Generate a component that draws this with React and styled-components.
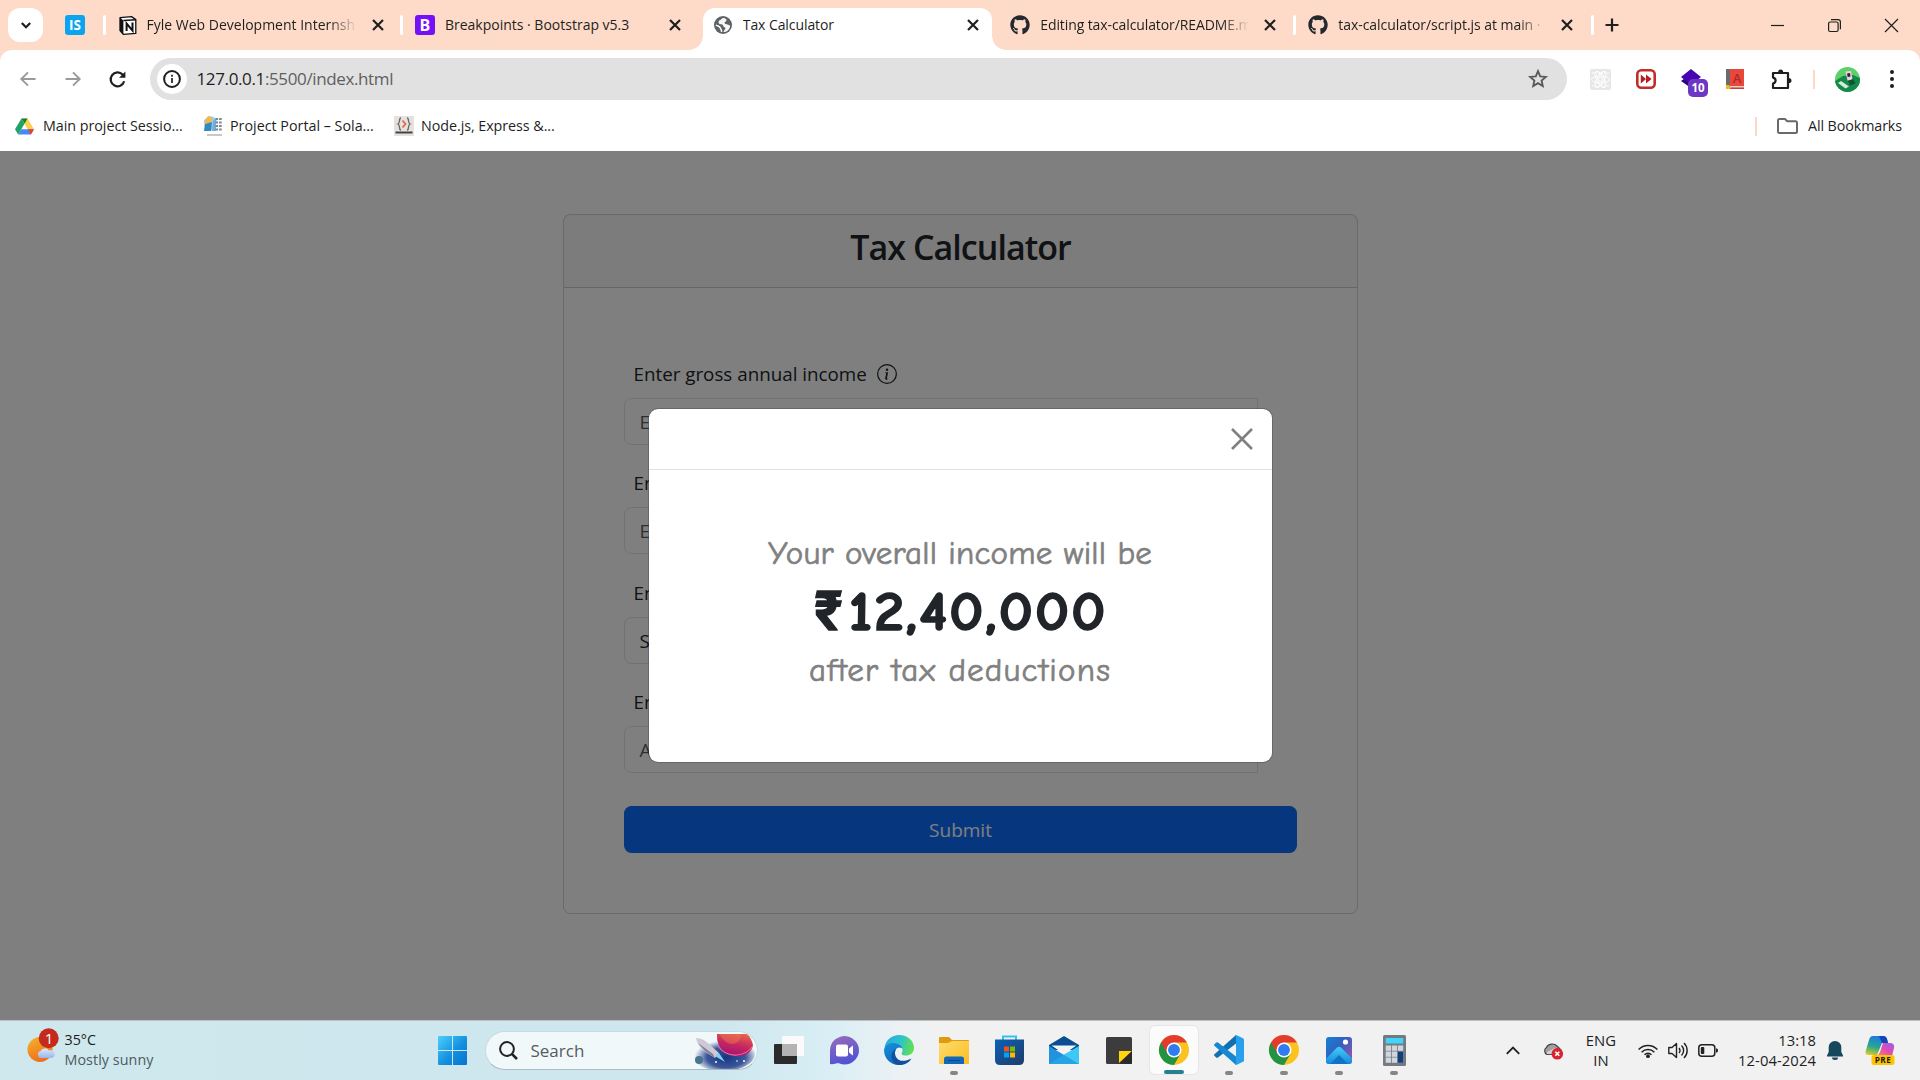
import React from "react";
import styled, { createGlobalStyle, css } from "styled-components";
import { FaGithub } from "react-icons/fa";

const GlobalStyle = createGlobalStyle`
  *, *::before, *::after { box-sizing: border-box; }
  body { margin: 0; overflow: hidden; font-family: "Open Sans", "Noto Sans", sans-serif; }
  svg { display: block; flex: none; overflow: visible; }
`;

const Screen = styled.div`
  width: 1920px;
  height: 1080px;
  display: flex;
  flex-direction: column;
  overflow: hidden;
  background: #fddbc8;
`;

const Label = styled.span`
  font-size: ${(p) => p.$size || 14}px;
  letter-spacing: ${(p) => p.$track || 0}px;
  font-weight: ${(p) => p.$weight || 400};
  color: ${(p) => p.$color || "#1f1f1f"};
  line-height: 20px;
  white-space: nowrap;
`;

/* ---------- tab strip ---------- */

const TabStrip = styled.div`
  height: 50px;
  flex: none;
  display: flex;
  align-items: flex-start;
  padding-left: 8px;
`;

const TabSearch = styled.div`
  width: 35px;
  height: 34px;
  margin-top: 8px;
  border-radius: 12px;
  background: #fff;
  display: flex;
  align-items: center;
  justify-content: center;
`;

const PinnedTab = styled.div`
  width: 59.5px;
  height: 50px;
  display: flex;
  align-items: center;
  padding-left: 22px;
`;

const Favicon = styled.div`
  width: 20px;
  height: 20px;
  border-radius: 3px;
  background: ${(p) => p.$bg};
  color: #fff;
  font-weight: 700;
  font-size: ${(p) => p.$size}px;
  line-height: 20px;
  text-align: center;
`;

const TabSeparator = styled.i`
  width: 3px;
  height: 20px;
  margin-top: 15px;
  border-radius: 2px;
  background: ${(p) => (p.$hidden ? "transparent" : "#fff")};
`;

const TabShape = styled.div`
  position: relative;
  height: 42px;
  margin-top: 8px;
  width: ${(p) => p.$width || 294.4}px;
  display: flex;
  align-items: center;
  padding: 0 ${(p) => p.$end || 17}px 8px ${(p) => p.$inset || 13}px;
  gap: ${(p) => p.$gap || 10}px;
  ${(p) =>
    p.$active &&
    css`
      background: #fff;
      border-radius: 12px 12px 0 0;
      &::before,
      &::after {
        content: "";
        position: absolute;
        bottom: 0;
        width: 14px;
        height: 14px;
      }
      &::before {
        left: -14px;
        background: radial-gradient(circle at 0 0, transparent 13.5px, #fff 14px);
      }
      &::after {
        right: -14px;
        background: radial-gradient(circle at 100% 0, transparent 13.5px, #fff 14px);
      }
    `}
`;

const TabTitle = styled.div`
  flex: 1;
  min-width: 0;
  height: 20px;
  margin-right: 4px;
  overflow: hidden;
  font-size: 14px;
  line-height: 20px;
  letter-spacing: ${(p) => p.$track || 0}px;
  color: #1f1f1f;
  white-space: nowrap;
  ${(p) => p.$fade && "mask-image: linear-gradient(90deg, #000 86%, transparent 99%);"}
`;

const NewTab = styled.div`
  margin: 18px 0 0 11px;
`;

const WindowControls = styled.div`
  margin-left: auto;
  height: 50px;
  display: flex;
  align-items: center;
  gap: 44px;
  padding-right: 22px;
`;

/* ---------- toolbar ---------- */

const Toolbar = styled.div`
  height: 51px;
  flex: none;
  display: flex;
  align-items: center;
  background: #fff;
  border-radius: 12px 12px 0 0;
  padding: 8px 21px 1px 20px;
`;

const NavButtons = styled.div`
  display: flex;
  align-items: center;
  gap: 28.5px;
  width: 130px;
`;

const AddressBar = styled.div`
  width: 1417px;
  height: 42px;
  border-radius: 21px;
  background: #e1e1e1;
  display: flex;
  align-items: center;
  padding: 0 19.5px 0 6.5px;
`;

const SiteInfo = styled.div`
  width: 30px;
  height: 30px;
  margin-right: 10px;
  border-radius: 50%;
  background: #fff;
  display: flex;
  align-items: center;
  justify-content: center;
`;

const Url = styled.div`
  flex: 1;
  font-size: 17px;
  line-height: 22px;
  letter-spacing: -0.37px;
  color: #1f1f1f;
  span { color: #5f5f5f; }
`;

const Extensions = styled.div`
  flex: 1;
  display: flex;
  align-items: center;
  padding-left: 23px;
`;

const LayersIcon = styled.div`
  position: relative;
  width: 20px;
  height: 20px;
  b {
    position: absolute;
    left: 7px;
    top: 10px;
    width: 20px;
    height: 18px;
    border-radius: 5px;
    background: #6c37c4;
    color: #fff;
    font-size: 11.5px;
    line-height: 18px;
    text-align: center;
  }
`;

const Divider = styled.i`
  width: 2px;
  height: 19px;
  background: #fbd9c6;
`;

const BookmarksBar = styled.div`
  height: 50px;
  flex: none;
  display: flex;
  align-items: center;
  background: #fff;
  padding: 0 18px 0 15px;
`;

const Bookmark = styled.div`
  display: flex;
  align-items: center;
  gap: ${(p) => p.$gap}px;
  width: ${(p) => p.$width}px;
`;

const AllBookmarks = styled.div`
  margin-left: auto;
  display: flex;
  align-items: center;
  svg { margin: 0 10px 0 20px; }
`;

/* ---------- page ---------- */

const Page = styled.main`
  position: relative;
  height: 869px;
  flex: none;
  background: #fff;
  color: #212529;
  padding-top: 63px;
`;

const Card = styled.section`
  width: 795px;
  height: 700px;
  margin-left: 563px;
  border: 1px solid rgba(0, 0, 0, 0.175);
  border-radius: 7.5px;
`;

const CardHeader = styled.header`
  height: 73px;
  border-bottom: 1px solid rgba(0, 0, 0, 0.175);
  background: rgba(33, 37, 41, 0.03);
  text-align: center;
  padding-top: 9px;
`;

const CardTitle = styled.h2`
  margin: 0;
  font-size: 34px;
  font-weight: 600;
  line-height: 46px;
  letter-spacing: -0.95px;
`;

const Form = styled.div`
  padding: 67.5px 60px 0;
  display: flex;
  flex-direction: column;
`;

const Field = styled.div`
  height: 109.5px;
  width: 634px;
`;

const FieldLabel = styled.div`
  height: 42px;
  padding: 0 0 6px 9.5px;
  display: flex;
  align-items: center;
  gap: 10px;
  font-size: 18.8px;
  line-height: 30px;
`;

const Input = styled.div`
  height: 47px;
  border: 1px solid #dee2e6;
  border-radius: 7.5px 0 0 7.5px;
  padding-left: 14.5px;
  font-size: 18.8px;
  line-height: 46px;
  color: ${(p) => (p.$filled ? "#212529" : "rgba(33, 37, 41, 0.75)")};
`;

const Submit = styled.div`
  width: 673px;
  height: 47px;
  margin-top: 12.5px;
  border-radius: 7.5px;
  background: #0d6efd;
  color: #fff;
  text-align: center;
  font-size: 19px;
  line-height: 48px;
`;

const Backdrop = styled.div`
  position: absolute;
  inset: 0;
  background: rgba(0, 0, 0, 0.5);
  display: flex;
  justify-content: center;
  align-items: flex-start;
  padding-top: 257px;
`;

const Dialog = styled.section`
  width: 625px;
  height: 355px;
  border: 1px solid rgba(0, 0, 0, 0.175);
  border-radius: 10px;
  background: #fff;
  background-clip: padding-box;
`;

const DialogHeader = styled.header`
  height: 61px;
  border-bottom: 1px solid #dee2e6;
  display: flex;
  align-items: center;
  justify-content: flex-end;
  padding-right: 20px;
`;

const DialogBody = styled.div`
  padding-top: 58px;
  display: flex;
  flex-direction: column;
  align-items: center;
  font-family: "Comic Sans MS", "Comic Neue", Inter, "Open Sans", sans-serif;
  font-variant-ligatures: none;
`;

const DialogLine = styled.div`
  font-size: 33px;
  line-height: 50px;
  letter-spacing: ${(p) => p.$track}px;
  color: #808080;
  -webkit-text-stroke: 0.7px #808080;
  white-space: nowrap;
`;

const Amount = styled.div`
  font-size: 54px;
  font-weight: 700;
  line-height: 67px;
  letter-spacing: 1.5px;
  color: #212529;
  -webkit-text-stroke: 1.4px #212529;
  white-space: nowrap;
  transform: translateY(1px) scaleX(1.12);
`;

const Rupee = styled.span`
  display: inline-block;
  transform: scaleX(0.84);
  transform-origin: 30% 50%;
`;

/* ---------- taskbar ---------- */

const Taskbar = styled.footer`
  height: 60px;
  flex: none;
  display: flex;
  align-items: center;
  border-top: 1px solid #bcc0c1;
  background: linear-gradient(90deg, #cee8ee 0, #cee7ee 720px, #d9eef5 830px, #ecf1f4 900px, #f1f1f1 945px);
`;

const Weather = styled.div`
  width: 438px;
  display: flex;
  align-items: center;
  padding-left: 26px;
  gap: 4.5px;
  & > svg { margin-bottom: 7px; }
`;

const Stack = styled.div`
  display: flex;
  flex-direction: column;
  align-items: ${(p) => p.$align || "flex-start"};
  margin-bottom: 1px;
`;

const SearchBox = styled.div`
  width: 273px;
  height: 39px;
  margin: 0 4px 0 17.5px;
  border-radius: 20px;
  border: 1px solid #c3dbe2;
  border-bottom-color: #a9bcc2;
  background: #f1f8fa;
  display: flex;
  align-items: center;
  padding: 0 2px 0 13px;
  overflow: hidden;
  span { flex: 1; margin-left: 13px; }
`;

const AppSlot = styled.div`
  position: relative;
  width: ${(p) => (p.$active ? 48 : 47)}px;
  height: 48px;
  margin: 0 ${(p) => (p.$active ? 3.5 : 4)}px;
  margin-top: -1px;
  border-radius: 5px;
  display: flex;
  align-items: center;
  justify-content: center;
  ${(p) => p.$active && "background: #fbfbfb; box-shadow: 0 0 0 1px #e6e6e6;"}
  &::after {
    content: "";
    position: absolute;
    bottom: ${(p) => (p.$active ? 0 : -0.5)}px;
    left: 50%;
    height: 4px;
    width: ${(p) => (p.$active ? 20 : 8)}px;
    border-radius: 2px;
    transform: translateX(-50%);
    background: ${(p) => (p.$active ? "#27808f" : p.$open ? "#868686" : "transparent")};
  }
`;

const Tray = styled.div`
  margin-left: auto;
  display: flex;
  align-items: center;
  padding-right: 25px;
`;

const Gap = styled.i`
  flex: none;
  width: ${(p) => p.$w}px;
`;

/* ---------- icons ---------- */

const Cross = ({ size = 9, stroke = 2.2, color = "#1f1f1f" }) => (
  <svg width={size} height={size} viewBox="0 0 10 10">
    <path d="M0 0 10 10M10 0 0 10" stroke={color} strokeWidth={(stroke * 10) / size} fill="none" />
  </svg>
);

const Notion = () => (
  <svg width="18" height="19" viewBox="0 0 18 19">
    <path d="M1 1.6 12.5.6 16.8 3.6V17.4L4.3 18.4 1 14.6Z" fill="#fff" stroke="#111" strokeWidth="1.3" strokeLinejoin="round" />
    <path d="M1 1.6 4.4 4.5V18.3L1 14.6Z" fill="#111" />
    <path d="M4.4 4.6 16.8 3.7" stroke="#111" strokeWidth="1.5" />
    <path d="M7.6 15V7.6L13.5 14.6V6.5" fill="none" stroke="#111" strokeWidth="2" />
  </svg>
);

const Globe = () => (
  <svg width="18" height="18" viewBox="0 0 18 18">
    <circle cx="9" cy="9" r="9" fill="#5f6368" />
    <path d="M10 1.9C7 2 7.500 4 5.400 4.200C4.300 5.500 4.200 7.600 5.800 8.100C7.800 8.400 9 8.300 9.300 10C9.400 11.600 11.400 10.800 11.400 12.300C11.200 14 9.800 14.200 9.500 16.100C13.500 16 16.200 13 16.100 9.200C14.800 9.500 14.200 8.300 12.600 8.200C11.200 8.300 10.400 7.300 10.600 6C12.200 5.700 12.600 4.700 12.400 3.200Z" fill="#fff" opacity=".95" />
    <path d="M1.900 9C3.500 10.200 6 9.900 6.200 11.800C6.300 13.200 8 13.300 7.500 16" fill="none" stroke="#fff" strokeWidth="1.500" />
  </svg>
);

const Arrow = ({ flip }) => (
  <svg width="16" height="16" viewBox="0 0 16 16" transform={flip ? "scale(-1 1)" : undefined}>
    <path d="M15.500 8H1.500M8 1.300 1.300 8 8 14.700" fill="none" stroke="#9a9a9a" strokeWidth="1.900" />
  </svg>
);

const Reload = () => (
  <svg width="17" height="17" viewBox="0 0 17 17">
    <path d="M15.200 10.300A6.900 6.900 0 1 1 13.600 3.600L15.600 5.700" fill="none" stroke="#1f1f1f" strokeWidth="2.200" />
    <path d="M16.400 .4V6.800H10Z" fill="#1f1f1f" />
  </svg>
);

const InfoDot = () => (
  <svg width="18" height="18" viewBox="0 0 18 18">
    <circle cx="9" cy="9" r="7.900" fill="none" stroke="#1f1f1f" strokeWidth="2" />
    <path d="M9 8V13M9 4.800V6.700" stroke="#1f1f1f" strokeWidth="1.700" />
  </svg>
);

const Star = () => (
  <svg width="20" height="20" viewBox="0 0 20 20">
    <path d="M10 2.200 12.200 7.400 17.800 7.900 13.600 11.600 14.800 17.100 10 14.200 5.200 17.100 6.400 11.600 2.200 7.900 7.800 7.400Z" fill="none" stroke="#5a5a5a" strokeWidth="1.900" />
  </svg>
);

const ReactExt = () => (
  <svg width="21" height="21" viewBox="0 0 21 21">
    <rect width="21" height="21" rx="2" fill="#e7e7e7" />
    <g fill="none" stroke="#fff" strokeWidth="1">
      {[0, 60, 120].map((a) => (
        <ellipse key={a} cx="10.500" cy="10.500" rx="9" ry="3.600" transform={`rotate(${a} 10.500 10.500)`} />
      ))}
      <circle cx="10.500" cy="10.500" r="2" />
      <path d="M2 4H19M2 17H19" strokeDasharray="2 1" />
    </g>
  </svg>
);

const FastForward = () => (
  <svg width="20" height="20" viewBox="0 0 20 20">
    <rect x="1.300" y="1.300" width="17.400" height="17.400" rx="4" fill="#fff" stroke="#c32c2a" strokeWidth="2.600" />
    <path d="M4.800 5.400 10 10 4.800 14.600ZM10 5.400 15.600 10 10 14.600Z" fill="#b3201f" />
  </svg>
);

const Layers = () => (
  <svg width="20" height="20" viewBox="0 0 20 20">
    <path d="M0 12 10 5 20 12 10 19Z" fill="#28077a" />
    <path d="M0 8 10 0 20 8 10 16Z" fill="#4604b4" />
  </svg>
);

const Book = () => (
  <svg width="18" height="20" viewBox="0 0 18 20">
    <rect width="18" height="20" fill="#e8473b" />
    <rect width="4" height="17" fill="#6d6a6a" />
    <path d="M0 17H18V20H0Z" fill="#d9d2cf" />
    <path d="M4 18.500H18V20H4Z" fill="#d33c33" />
    <path d="M0 16H3L5 19 3 20H0Z" fill="#f3b61f" />
    <text x="11" y="13.500" fontSize="13" fontWeight="600" fill="#b02b25" textAnchor="middle">A</text>
  </svg>
);

const Puzzle = () => (
  <svg width="21" height="21" viewBox="0 0 21 21">
    <path d="M2 4H17V19H2V14.600Q4.600 13.600 4.600 11.500T2 8.400Z" fill="none" stroke="#1f1f1f" strokeWidth="2.200" strokeLinejoin="round" />
    <path d="M7 3.500A2.600 3 0 0 1 12.200 3.500ZM17.500 8.900A3 2.600 0 0 1 17.500 14.100Z" fill="#1f1f1f" />
  </svg>
);

const Avatar = () => (
  <svg width="25" height="25" viewBox="0 0 25 25">
    <defs><clipPath id="av"><circle cx="12.500" cy="12.500" r="12.500" /></clipPath></defs>
    <g clipPath="url(#av)">
      <rect width="25" height="25" fill="#5dd06b" />
      <path d="M0 14 8 9 18 8 25 11V25H0Z" fill="#138a4a" />
      <path d="M10.500 4.500 16 4 17.500 12.500 12.500 13.500Z" fill="#f3cfe3" />
      <path d="M12 6.500 15 6 15.500 9.500 12.700 10Z" fill="#2a2333" />
      <path d="M13 14 18 12 20.500 16.500 15 18.500Z" fill="#14532f" />
      <path d="M3 16 6 14 14 19.500 10.500 21.500Z" fill="#d7e9d9" />
    </g>
  </svg>
);

const Dots = () => (
  <svg width="4" height="20" viewBox="0 0 4 20">
    <circle cx="2" cy="3" r="2" fill="#1f1f1f" /><circle cx="2" cy="10" r="2" fill="#1f1f1f" /><circle cx="2" cy="17" r="2" fill="#1f1f1f" />
  </svg>
);

const Drive = () => (
  <svg width="19" height="17" viewBox="0 0 20 17">
    <path d="M6.800 0 0 11.500 3.300 17 10 5.500Z" fill="#1fa463" />
    <path d="M6.800 0H13.200L20 11.500H13.400Z" fill="#ffd04b" />
    <path d="M3.300 17 6.600 11.500H20L16.700 17Z" fill="#4688f4" />
    <path d="M13.400 11.500H20L16.700 17Z" fill="#e94235" />
    <path d="M6.800 0H13.200L10 5.500Z" fill="#12803c" />
  </svg>
);

const Portal = () => (
  <svg width="20" height="20" viewBox="0 0 20 20">
    <path d="M1 4 6 0 11 1 14 5 10 14 2 15Z" fill="#9fcfec" />
    <path d="M1 7 5 0 9.500 2 7.500 7Z" fill="#f6b93b" />
    <path d="M2 8 9 6 8 15 1 15Z" fill="#3587bf" />
    <path d="M10 5 13 2V15H9Z" fill="#6cb0dd" />
    <path d="M12.500 3H19M12.500 6.500H19M12.500 10H19M12.500 13.500H19" stroke="#7e878f" strokeWidth="1.900" strokeDasharray="2.600 1" />
    <path d="M4 19H19" stroke="#a4a4a4" strokeWidth="1.200" />
  </svg>
);

const NodeIcon = () => (
  <svg width="20" height="20" viewBox="0 0 20 20">
    <rect width="20" height="20" fill="#e4e1de" />
    <path d="M7 2C4.500 2 6.500 7 4 8 6.500 9 4.500 14 7 14M13 2C15.500 2 13.500 7 16 8 13.500 9 15.500 14 13 14" fill="none" stroke="#6b6664" strokeWidth="1.300" />
    <path d="M8.500 4.500 11.500 8 8.500 11.500" fill="none" stroke="#e2694a" strokeWidth="1.800" />
    <path d="M1.500 16.500H18.500" stroke="#444" strokeWidth="2" />
  </svg>
);

const Folder = () => (
  <svg width="21" height="16" viewBox="0 0 21 16">
    <path d="M1 2.500Q1 1 2.500 1H8L10.200 3.200H18.500Q20 3.200 20 4.700V13.500Q20 15 18.500 15H2.500Q1 15 1 13.500Z" fill="none" stroke="#6a6a6a" strokeWidth="2" />
  </svg>
);

const InfoCircle = () => (
  <svg width="20" height="20" viewBox="0 0 16 16" fill="#212529">
    <path d="M8 15A7 7 0 1 1 8 1a7 7 0 0 1 0 14m0 1A8 8 0 1 0 8 0a8 8 0 0 0 0 16" />
    <path d="m8.930 6.588-2.290.287-.082.380.450.083c.294.070.352.176.288.469l-.738 3.468c-.194.897.105 1.319.808 1.319.545 0 1.178-.252 1.465-.598l.088-.416c-.2.176-.492.246-.686.246-.275 0-.375-.193-.304-.533zM9 4.500a1 1 0 1 1-2 0 1 1 0 0 1 2 0" />
  </svg>
);

const WeatherIcon = () => (
  <svg width="34" height="36" viewBox="0 0 34 36">
    <defs>
      <linearGradient id="sun" x1="0" y1="0" x2=".4" y2="1"><stop offset="0" stopColor="#f2b52e" /><stop offset="1" stopColor="#f0701a" /></linearGradient>
      <linearGradient id="cl" x1="0" y1="0" x2="0" y2="1"><stop offset="0" stopColor="#dce8fb" /><stop offset="1" stopColor="#9ab6ec" /></linearGradient>
    </defs>
    <circle cx="14" cy="20.500" r="12.500" fill="url(#sun)" />
    <path d="M15 29A3.600 3.600 0 0 1 14.500 22A5 5 0 0 1 23 21.500A3.800 3.800 0 0 1 26 29Z" fill="url(#cl)" />
    <circle cx="22.700" cy="9.300" r="10" fill="#c42b1c" />
    <text x="23" y="14.700" fontSize="15" fill="#fff" textAnchor="middle">1</text>
  </svg>
);

const WindowsLogo = () => (
  <svg width="29" height="29" viewBox="0 0 29 29">
    <defs><linearGradient id="win" x1="0" y1="0" x2="1" y2="1"><stop offset="0" stopColor="#4cd0fb" /><stop offset=".55" stopColor="#1490df" /><stop offset="1" stopColor="#0672cf" /></linearGradient></defs>
    <path d="M1 0H14V14H0V1Q0 0 1 0ZM15 0H28Q29 0 29 1V14H15ZM0 15H14V29H1Q0 29 0 28ZM15 15H29V28Q29 29 28 29H15Z" fill="url(#win)" />
  </svg>
);

const Magnifier = () => (
  <svg width="19" height="19" viewBox="0 0 19 19">
    <circle cx="8" cy="8" r="6.900" fill="none" stroke="#222" strokeWidth="2" />
    <path d="M12.800 12.800 18 18" stroke="#222" strokeWidth="2.600" />
  </svg>
);

const Rocket = () => (
  <svg width="64" height="33" viewBox="0 0 64 33">
    <defs>
      <radialGradient id="sky" cx=".55" cy=".6" r=".5"><stop offset="0" stopColor="#17367f" /><stop offset=".6" stopColor="#3b569a" /><stop offset="1" stopColor="#f1f8fa" /></radialGradient>
      <linearGradient id="pl" x1=".7" y1="0" x2=".3" y2="1"><stop offset="0" stopColor="#e8604c" /><stop offset=".5" stopColor="#c4265f" /><stop offset="1" stopColor="#a2107f" /></linearGradient>
    </defs>
    <ellipse cx="32" cy="20" rx="32" ry="17" fill="url(#sky)" />
    <path d="M26 0H56Q60 3 62 11Q61 18 54 21Q44 24 35 19Q25 12 26 0Z" fill="url(#pl)" />
    <path d="M28 0H50Q50 8 42 10Q34 10 28 0Z" fill="#f07a55" opacity=".45" />
    <path d="M27 12Q34 22 46 21Q56 20 61 13" stroke="#f26b8b" strokeWidth="1.200" fill="none" />
    <path d="M5 4Q12 4 18 10L28 19 24 24 13 17Q6 11 5 4Z" fill="#cfc9d6" />
    <path d="M7 9 14 17 24 24 22 20Z" fill="#857f96" />
    <path d="M24 22 28 19 34 28Z" fill="#7fd3f5" />
    <circle cx="8" cy="26" r="4" fill="#47748f" />
    <g fill="#fff"><circle cx="25" cy="28" r="1" /><circle cx="46" cy="27" r=".8" /><circle cx="53" cy="27" r="1" /></g>
  </svg>
);

const TaskView = () => (
  <svg width="30" height="28" viewBox="0 0 30 28">
    <rect x="0" y="8" width="23" height="20" rx="1" fill="#2b2b2b" />
    <rect x="8" y="0" width="22" height="20" rx="1" fill="#fafafa" />
    <rect x="8" y="8" width="15" height="12" fill="#b3b3b3" />
  </svg>
);

const Chat = () => (
  <svg width="29" height="29" viewBox="0 0 29 29">
    <defs><linearGradient id="ch" x1="0" y1="0" x2=".3" y2="1"><stop offset="0" stopColor="#9a6db8" /><stop offset=".5" stopColor="#7460c8" /><stop offset="1" stopColor="#5353d0" /></linearGradient></defs>
    <path d="M0 28V14.500A14.500 14.200 0 1 1 8 27Q4 28.500 0 28Z" fill="url(#ch)" />
    <rect x="6" y="8.500" width="12" height="12" rx="2" fill="#fff" />
    <path d="M19 12.500 23 9.500V19.500L19 16.500Z" fill="#fff" />
  </svg>
);

const Edge = () => (
  <svg width="30" height="30" viewBox="0 0 30 30">
    <defs>
      <linearGradient id="e1" x1="0" y1=".3" x2="1" y2=".5"><stop offset="0" stopColor="#2aa8dc" /><stop offset=".5" stopColor="#2cc1d0" /><stop offset="1" stopColor="#63e04d" /></linearGradient>
      <linearGradient id="e2" x1="0" y1="0" x2=".6" y2="1"><stop offset="0" stopColor="#1592dc" /><stop offset="1" stopColor="#0f62b5" /></linearGradient>
    </defs>
    <path d="M.5 13C1.500 5 8 0 15 0C24 0 30 6 30 13C30 18 26 20.500 22 20.500C18 20.500 16.800 19 18 17.500C20 14 17 9.500 11.500 9.500C6 9.500 2 11 .5 13Z" fill="url(#e1)" />
    <path d="M0 15C1 10 6 7.500 11 8.200C15.500 9 18 11 18.300 13.500C14.500 10.500 10.500 14 11 18.500C12 26 20 29 26 24.500C23 28.500 19 30 15 30C6 30 0 23 0 15Z" fill="url(#e2)" />
    <path d="M11 17C9.500 24 17 29 27.500 23.500C25 28 20 30 15 30C10 29 7 25 7.500 20C8 17.500 9.500 15 11.800 14Z" fill="#124f9c" />
  </svg>
);

const Explorer = () => (
  <svg width="30" height="27" viewBox="0 0 30 27">
    <defs><linearGradient id="fo" x1="0" y1="0" x2="1" y2="1"><stop offset="0" stopColor="#ffdc6e" /><stop offset="1" stopColor="#fbbd22" /></linearGradient></defs>
    <path d="M0 1Q0 0 1 0H10L13 3H29Q30 3 30 4V12H0Z" fill="#dd9b0d" />
    <path d="M0 6H9L13 4H30V27H1Q0 27 0 26Z" fill="url(#fo)" />
    <path d="M5 27V22Q5 19.500 7.500 19.500H22.500Q25 19.500 25 22V27Z" fill="#1168b8" />
    <path d="M9 23.500H21" stroke="#0b4a8a" strokeWidth="1" />
  </svg>
);

const Store = () => (
  <svg width="29" height="30" viewBox="0 0 29 30">
    <defs><linearGradient id="st" x1="0" y1="0" x2="1" y2="1"><stop offset="0" stopColor="#0a63b6" /><stop offset="1" stopColor="#203a68" /></linearGradient></defs>
    <path d="M8 6V1.500H21V6" fill="none" stroke="#35c1f1" strokeWidth="2" />
    <path d="M0 4.500H29V25Q29 30 24 30H5Q0 30 0 25Z" fill="url(#st)" />
    <path d="M9 11.500H14V16.500H9Z" fill="#f25022" /><path d="M15 11.500H20V16.500H15Z" fill="#7fba00" />
    <path d="M9 17.500H14V22.500H9Z" fill="#00a4ef" /><path d="M15 17.500H20V22.500H15Z" fill="#ffb900" />
  </svg>
);

const Mail = () => (
  <svg width="30" height="28" viewBox="0 0 30 28">
    <path d="M0 9 15 0 30 9V14H0Z" fill="#0a4f94" />
    <path d="M2.500 9.500H27.500L15 18Z" fill="#f4f4f4" />
    <path d="M0 10 30 28H0Z" fill="#2292dd" />
    <path d="M30 10 15 18.500 30 28Z" fill="#3cc9f5" />
    <path d="M0 28 15 18.500 30 28Z" fill="#26a4e6" />
  </svg>
);

const Sticky = () => (
  <svg width="26" height="27" viewBox="0 0 26 27">
    <rect width="26" height="27" rx="1.500" fill="#3c3c3c" />
    <path d="M13 26V14H26Z" fill="#ffd60a" />
    <path d="M13.500 26.500 26 14V26Q26 27 25 27Z" fill="#2a2a2a" />
  </svg>
);

const Chrome = () => (
  <svg width="30" height="30" viewBox="0 0 48 48">
    <circle cx="24" cy="24" r="24" fill="#fcc31e" />
    <path d="M3.200 12A24 24 0 0 0 24 48L34.400 30 24 24V12Z" fill="#229342" />
    <path d="M3.200 12A24 24 0 0 1 44.800 12H24L13.600 30Z" fill="#e33b2e" />
    <circle cx="24" cy="24" r="12" fill="#fff" />
    <circle cx="24" cy="24" r="9.500" fill="#2f7cf0" />
  </svg>
);

const VSCode = () => (
  <svg width="30" height="30" viewBox="0 0 30 30">
    <path d="M22 0V8.500L4 22.500Q3 23 2.200 22.400L.4 20.800Q-.4 20 .4 19.200Z" fill="#0f70b3" />
    <path d="M22 30V21.500L4 7.500Q3 7 2.200 7.600L.4 9.200Q-.4 10 .4 10.800Z" fill="#1788cf" />
    <path d="M21 .4Q22 0 22.800.3L29 3.300Q30 3.800 30 4.800V25.200Q30 26.200 29 26.700L22.800 29.700Q22 30 21 29.600L22 28V2Z" fill="#27a0ee" />
  </svg>
);

const Photos = () => (
  <svg width="26" height="27" viewBox="0 0 26 27">
    <defs>
      <linearGradient id="ph" x1="0" y1="0" x2="1" y2=".8"><stop offset="0" stopColor="#1180da" /><stop offset=".5" stopColor="#3560bd" /><stop offset="1" stopColor="#9a52ad" /></linearGradient>
      <linearGradient id="pm" x1="0" y1="0" x2="0" y2="1"><stop offset="0" stopColor="#43cdf6" /><stop offset="1" stopColor="#148ade" /></linearGradient>
      <clipPath id="pc"><rect width="26" height="27" rx="3" /></clipPath>
    </defs>
    <g clipPath="url(#pc)">
      <rect width="26" height="27" fill="url(#ph)" />
      <path d="M0 22 11 10.500Q13 9 15 10.500L26 21.500V27H0Z" fill="url(#pm)" />
      <path d="M4 27 13 18 22 27Z" fill="#1173c7" />
      <circle cx="19.500" cy="5" r="2.600" fill="#fff" />
    </g>
  </svg>
);

const Calculator = () => (
  <svg width="23" height="31" viewBox="0 0 23 31">
    <rect width="23" height="31" rx="1.500" fill="#747a80" />
    <rect x="2.700" y="3" width="17.600" height="5.500" fill="#40d5fb" />
    {[10.500, 16.500, 22.500].map((y) => [2.700, 8.800, 14.900].map((x) => (
      <rect key={`${x}${y}`} x={x} y={y} width="5.300" height="5.300" fill="#cfd6dc" />
    )))}
    <rect x="14.900" y="16.500" width="5.300" height="11.300" fill="#123f7c" />
  </svg>
);

const ChevronUp = () => (
  <svg width="14" height="9" viewBox="0 0 14 9"><path d="M.8 7.800 7 1.500 13.200 7.800" fill="none" stroke="#222" strokeWidth="1.900" /></svg>
);

const OneDrive = () => (
  <svg width="20" height="18" viewBox="0 0 20 18">
    <path d="M4 12.500A4 4 0 0 1 3.500 5.500A6 5 0 0 1 14 4L18 8V12Z" fill="#a0a0a0" stroke="#444" strokeWidth="1.200" />
    <path d="M4 10 12 6 15 12H4Z" fill="#d4d4d4" />
    <circle cx="14.300" cy="11.800" r="5.800" fill="#d9232e" />
    <path d="M12.300 9.800 16.300 13.800M16.300 9.800 12.300 13.800" stroke="#fff" strokeWidth="1.600" />
  </svg>
);

const Wifi = () => (
  <svg width="20" height="16" viewBox="0 0 20 16">
    <g fill="none" stroke="#222" strokeWidth="1.500">
      <path d="M.6 6.500A13 13 0 0 1 19.400 6.500M3.600 9.200A9 9 0 0 1 16.400 9.200M6.500 11.800A5 5 0 0 1 13.500 11.800" />
    </g>
    <circle cx="10" cy="13.200" r="1.900" fill="#222" />
  </svg>
);

const Speaker = () => (
  <svg width="20" height="17" viewBox="0 0 20 17">
    <g fill="none" stroke="#222" strokeWidth="1.400" strokeLinejoin="round">
      <path d="M.8 5.500H4L8.500 1.500V15.500L4 11.500H.8ZM11 6A4 4 0 0 1 11 11M13.500 3.500A7 7 0 0 1 13.500 13.500M16 1A10.500 10.500 0 0 1 16 16" />
    </g>
  </svg>
);

const Battery = () => (
  <svg width="20" height="13" viewBox="0 0 20 13">
    <rect x=".8" y=".8" width="16" height="11.400" rx="3" fill="none" stroke="#222" strokeWidth="1.500" />
    <rect x="2.800" y="3" width="3.500" height="7" rx="1" fill="#222" />
    <path d="M18 4.500H19Q20 5 20 6.500T19 8.500H18Z" fill="#222" />
  </svg>
);

const Bell = () => (
  <svg width="16" height="19" viewBox="0 0 16 19">
    <path d="M8 0A6.300 6.300 0 0 1 14.300 6.300V11L16 14.500V15.500H0V14.500L1.700 11V6.300A6.300 6.300 0 0 1 8 0Z" fill="#17475a" />
    <path d="M5 16.500H11A3 2.500 0 0 1 5 16.500Z" fill="#17475a" />
  </svg>
);

const Copilot = () => (
  <svg width="30" height="29" viewBox="0 0 30 29">
    <defs>
      <linearGradient id="c1" x1=".3" y1="0" x2="0" y2="1"><stop offset="0" stopColor="#1f7ce0" /><stop offset=".5" stopColor="#28a68c" /><stop offset="1" stopColor="#f3cf1c" /></linearGradient>
      <linearGradient id="c2" x1="1" y1="0" x2="0" y2="1"><stop offset="0" stopColor="#9c5cf0" /><stop offset=".5" stopColor="#e14cb0" /><stop offset="1" stopColor="#fa8a5b" /></linearGradient>
    </defs>
    <path d="M8 0H18Q21 0 22 3L23 7H17L12 19H4Q-1 19 1 14L4 4Q5 0 8 0Z" fill="url(#c1)" />
    <path d="M14 0H18Q21 0 22 3L23 7H17Z" fill="#1544b8" />
    <path d="M18 7H26Q30 8 29 12L27 20H11Q14 19 15 16Z" fill="url(#c2)" />
    <rect x="6.500" y="19" width="23" height="10" rx="2.500" fill="#fdc500" />
    <text x="18" y="27" fontSize="8.200" fontWeight="700" letterSpacing=".5" fill="#1a1a1a" textAnchor="middle">PRE</text>
  </svg>
);

/* ---------- composition ---------- */

const Tab = ({ icon, title, track, fade, ...shape }) => (
  <TabShape {...shape}>
    {icon}
    <TabTitle $track={track} $fade={fade}>{title}</TabTitle>
    <Cross size={10} />
  </TabShape>
);

const fields = [
  { label: "Enter gross annual income", value: "Enter amount" },
  { label: "Enter extra income", value: "Enter amount" },
  { label: "Enter age group", value: "Select age", filled: true },
  { label: "Enter deductions", value: "Amount of applied" },
];

const apps = [
  [TaskView], [Chat], [Edge], [Explorer, "open"], [Store], [Mail], [Sticky],
  [Chrome, "active"], [VSCode, "open"], [Chrome, "open"], [Photos, "open"], [Calculator, "open"],
];

export default function App() {
  return (
    <Screen>
      <GlobalStyle />
      <TabStrip>
        <TabSearch>
          <svg width="10" height="7" viewBox="0 0 10 7"><path d="M.8 1 5 5.300 9.200 1" fill="none" stroke="#1f1f1f" strokeWidth="2.200" /></svg>
        </TabSearch>
        <PinnedTab><Favicon $bg="#0aa5ee" $size={13.5}>IS</Favicon></PinnedTab>
        <TabSeparator />
        <Tab icon={<Notion />} title="Fyle Web Development Internsh" track={0} fade $inset={13} />
        <TabSeparator />
        <Tab icon={<Favicon $bg="#7411f6" $size={16}>B</Favicon>} title="Breakpoints · Bootstrap v5.3" track={0} $inset={12} />
        <TabSeparator $hidden />
        <Gap $w={3} />
        <Tab icon={<Globe />} title="Tax Calculator" track={-0.08} $active $width={289} $inset={11} $gap={10.5} $end={14.5} />
        <Gap $w={5} />
        <Tab icon={<FaGithub size={20} color="#24292f" />} title="Editing tax-calculator/README.m" track={-0.1} fade $width={296} $inset={13} $end={18} />
        <TabSeparator />
        <Tab icon={<FaGithub size={20} color="#24292f" />} title="tax-calculator/script.js at main ·" track={-0.05} fade $inset={12} $end={19} />
        <TabSeparator />
        <NewTab>
          <svg width="14" height="14" viewBox="0 0 14 14"><path d="M7 .5V13.500M.5 7H13.500" stroke="#1f1f1f" strokeWidth="2.200" /></svg>
        </NewTab>
        <WindowControls>
          <svg width="13" height="13" viewBox="0 0 13 13"><path d="M0 6.500H13" stroke="#1f1f1f" strokeWidth="1.200" /></svg>
          <svg width="13" height="13" viewBox="0 0 13 13"><g fill="none" stroke="#1f1f1f" strokeWidth="1.200"><rect x=".6" y="3" width="9.500" height="9.500" rx="1.500" /><path d="M3 .6H10Q12.400.6 12.400 3V10.300" /></g></svg>
          <Cross size={13} stroke={1.2} />
        </WindowControls>
      </TabStrip>

      <Toolbar>
        <NavButtons><Arrow /><Arrow flip /><Reload /></NavButtons>
        <AddressBar>
          <SiteInfo><InfoDot /></SiteInfo>
          <Url>127.0.0.1<span>:5500/index.html</span></Url>
          <Star />
        </AddressBar>
        <Extensions>
          <ReactExt />
          <Gap $w={24.5} />
          <FastForward />
          <Gap $w={25.5} />
          <LayersIcon><Layers /><b>10</b></LayersIcon>
          <Gap $w={25} />
          <Book />
          <Gap $w={27} />
          <Puzzle />
          <Gap $w={21} />
          <Divider />
          <Gap $w={20} />
          <Avatar />
          <Gap $w={30} />
          <Dots />
        </Extensions>
      </Toolbar>

      <BookmarksBar>
        <Bookmark $width={188} $gap={9}><Drive /><Label $size={14.3} $track={-0.03}>Main project Sessio...</Label></Bookmark>
        <Bookmark $width={191} $gap={7}><Portal /><Label $size={14.3}>Project Portal – Sola...</Label></Bookmark>
        <Bookmark $width={180} $gap={7}><NodeIcon /><Label $size={14.3} $track={-0.05}>Node.js, Express &amp;...</Label></Bookmark>
        <AllBookmarks><Divider /><Folder /><Label $size={14.3} $track={-0.1}>All Bookmarks</Label></AllBookmarks>
      </BookmarksBar>

      <Page>
        <Card>
          <CardHeader><CardTitle>Tax Calculator</CardTitle></CardHeader>
          <Form>
            {fields.map((f) => (
              <Field key={f.label}>
                <FieldLabel>{f.label}<InfoCircle /></FieldLabel>
                <Input $filled={f.filled}>{f.value}</Input>
              </Field>
            ))}
            <Submit>Submit</Submit>
          </Form>
        </Card>
        <Backdrop>
          <Dialog>
            <DialogHeader><Cross size={20} stroke={2.6} color="#808080" /></DialogHeader>
            <DialogBody>
              <DialogLine $track={0.2}>Your overall income will be</DialogLine>
              <Amount><Rupee>₹</Rupee>12,40,000</Amount>
              <DialogLine $track={1.2}>after tax deductions</DialogLine>
            </DialogBody>
          </Dialog>
        </Backdrop>
      </Page>

      <Taskbar>
        <Weather>
          <WeatherIcon />
          <Stack>
            <Label $size={14.3} $color="#1b1b1b">35°C</Label>
            <Label $size={14.3} $color="#4d5a5e" $track={0.07}>Mostly sunny</Label>
          </Stack>
        </Weather>
        <WindowsLogo />
        <SearchBox><Magnifier /><Label $size={17} $color="#555c5f">Search</Label><Rocket /></SearchBox>
        {apps.map(([Icon, state], i) => (
          <AppSlot key={i} $active={state === "active"} $open={state === "open"}><Icon /></AppSlot>
        ))}
        <Tray>
          <ChevronUp />
          <Gap $w={23} />
          <OneDrive />
          <Gap $w={23} />
          <Stack $align="center"><Label $size={14.8}>ENG</Label><Label $size={14.8}>IN</Label></Stack>
          <Gap $w={22} />
          <Wifi /><Gap $w={10} /><Speaker /><Gap $w={10} /><Battery />
          <Gap $w={20} />
          <Stack $align="flex-end"><Label $size={14.8}>13:18</Label><Label $size={14.8} $track={0.08}>12-04-2024</Label></Stack>
          <Gap $w={11} />
          <Bell />
          <Gap $w={22} />
          <Copilot />
        </Tray>
      </Taskbar>
    </Screen>
  );
}
